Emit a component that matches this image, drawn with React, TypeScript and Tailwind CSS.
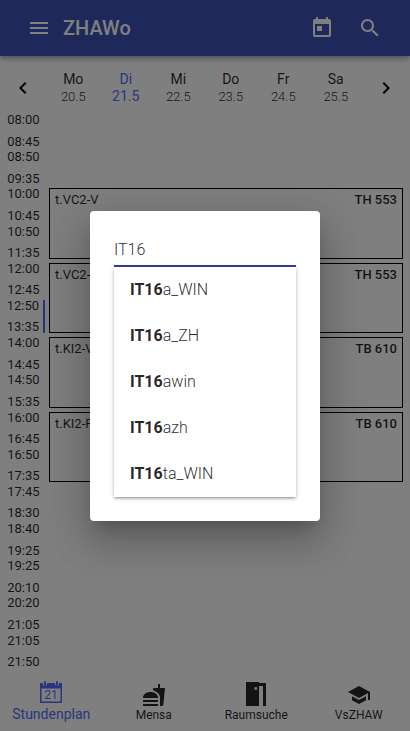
import React from "react";

const days = [
  ["Mo", "20.5"],
  ["Di", "21.5"],
  ["Mi", "22.5"],
  ["Do", "23.5"],
  ["Fr", "24.5"],
  ["Sa", "25.5"],
];

const slots = [
  ["08:00", "08:45"],
  ["08:50", "09:35"],
  ["10:00", "10:45"],
  ["10:50", "11:35"],
  ["12:00", "12:45"],
  ["12:50", "13:35"],
  ["14:00", "14:45"],
  ["14:50", "15:35"],
  ["16:00", "16:45"],
  ["16:50", "17:35"],
  ["17:45", "18:30"],
  ["18:40", "19:25"],
  ["19:25", "20:10"],
  ["20:20", "21:05"],
  ["21:05", "21:50"],
];

const lessons = [
  ["t.VC2-V", "TH 553"],
  ["t.VC2-P", "TH 553"],
  ["t.KI2-V", "TB 610"],
  ["t.KI2-P", "TB 610"],
];

const suggestions = ["a_WIN", "a_ZH", "awin", "azh", "ta_WIN"];

function Icon({ d, className = "size-6" }: { d: string; className?: string }) {
  return (
    <svg viewBox="0 0 24 24" className={`shrink-0 fill-current ${className}`}>
      <path d={d} />
    </svg>
  );
}

function CalendarIcon() {
  return (
    <svg viewBox="0 0 22 22" className="h-[22px] w-[22px]">
      <path
        fill="currentColor"
        fillRule="evenodd"
        d="M0 2h3v1a2 2 0 0 0 4 0V2h8v1a2 2 0 0 0 4 0V2h3v20H0zM1.5 7.5v13h19v-13z"
      />
      <rect x="4" y="0" width="2" height="5" rx="1" fill="currentColor" />
      <rect x="16" y="0" width="2" height="5" rx="1" fill="currentColor" />
      <text x="11" y="18.2" textAnchor="middle" fontSize="12" fontFamily="Roboto, sans-serif" fill="currentColor">
        21
      </text>
    </svg>
  );
}

function DoorIcon() {
  return (
    <svg viewBox="0 0 20 24" className="h-6 w-5 fill-current">
      <path fillRule="evenodd" d="M0 0h13v24H0zM8.5 5.2v2.6h2.6V5.2z" />
      <path d="M13 1h7v23h-3V4h-4z" />
    </svg>
  );
}

function Header() {
  return (
    <header className="relative z-10 flex h-14 shrink-0 items-center bg-[#3f51b5] pr-7 pl-[27px] text-white shadow-[0_2px_4px_-1px_rgba(0,0,0,0.2),0_4px_5px_rgba(0,0,0,0.14),0_1px_10px_rgba(0,0,0,0.12)]">
      <Icon d="M3 18h18v-2H3v2zm0-5h18v-2H3v2zm0-7v2h18V6H3z" />
      <h1 className="ml-3 grow text-[20px] font-medium">ZHAWo</h1>
      <Icon d="M19 3h-1V1h-2v2H8V1H6v2H5c-1.11 0-1.99.9-1.99 2L3 19c0 1.1.89 2 2 2h14c1.1 0 2-.9 2-2V5c0-1.1-.9-2-2-2zm0 16H5V8h14v11zM7 10h5v5H7z" />
      <Icon
        className="ml-6 size-6"
        d="M15.5 14h-.79l-.28-.27C15.41 12.59 16 11.11 16 9.5 16 5.91 13.09 3 9.5 3S3 5.91 3 9.5 5.91 16 9.5 16c1.61 0 3.09-.59 4.23-1.57l.27.28v.79l5 4.99L20.49 19l-4.99-5zm-6 0C7.01 14 5 11.99 5 9.5S7.01 5 9.5 5 14 7.01 14 9.5 11.99 14 9.5 14z"
      />
    </header>
  );
}

function DayBar() {
  return (
    <div className="flex h-14 shrink-0 items-center px-[11px]">
      <Icon className="mt-2 size-6" d="M15.41 7.41L14 6l-6 6 6 6 1.41-1.41L10.83 12z" />
      <div className="mt-2 ml-3 grid w-[315px] grid-cols-6 text-center">
        {days.map(([name, date]) => (
          <div
            key={name}
            className={
              name === "Di"
                ? "text-[14px] leading-[17px] text-[#536dfe]"
                : "text-[14px] leading-[17px] text-black/85"
            }
          >
            <div>{name}</div>
            <div className={name === "Di" ? "" : "text-[13px] font-light"}>{date}</div>
          </div>
        ))}
      </div>
      <Icon className="mt-2 ml-3 size-6" d="M10 6L8.59 7.41 13.17 12l-4.58 4.59L10 18l6-6z" />
    </div>
  );
}

function Schedule() {
  return (
    <main className="flex h-[558px] shrink-0 text-[13px] leading-[15px] text-black/85">
      <div className="flex w-[45px] flex-col">
        {slots.map(([from, to], i) => (
          <div key={i} className="flex h-[37.2px] flex-col">
            <div
              className={
                i === 5
                  ? "mt-0.5 flex h-[33px] flex-col justify-between border-r-2 border-[#536dfe] pr-1 text-right"
                  : "flex h-[36.5px] flex-col justify-between pr-[5.5px] text-right"
              }
            >
              <div className={i === 5 ? "-mt-0.5" : ""}>{from}</div>
              <div className={i === 5 ? "-mb-[1.5px]" : ""}>{to}</div>
            </div>
          </div>
        ))}
      </div>
      <div className="flex grow flex-col pt-[74.4px] pr-[7px] pl-1">
        {lessons.map(([course, room], i) => (
          <div key={i} className="h-[74.4px] py-0.5">
            <div className="flex h-full justify-between border border-black px-[5px] pt-[3px]">
              <span>{course}</span>
              <span className="font-medium">{room}</span>
            </div>
          </div>
        ))}
      </div>
    </main>
  );
}

function BottomNav() {
  return (
    <nav className="grid h-[61px] shrink-0 grid-cols-4 text-center text-[12px] leading-4 text-black/85">
      <div className="flex flex-col items-center pt-[11px] text-[#536dfe]">
        <CalendarIcon />
        <span className="mt-[3px] text-[14px]">Stundenplan</span>
      </div>
      <div className="flex flex-col items-center pt-[13px]">
        <Icon d="M18.06 22.99h1.66c.84 0 1.53-.64 1.63-1.46L23 5.05h-5V1h-1.97v4.05h-4.97l.3 2.34c1.71.47 3.31 1.32 4.27 2.26 1.44 1.42 2.43 2.89 2.43 5.29v8.05zM1 21.99V21h15.03v.99c0 .55-.45 1-1.01 1H2.01c-.56 0-1.01-.45-1.01-1zm15.03-7c0-8-15.03-8-15.03 0h15.03zM1.02 17h15v2h-15z" />
        <span>Mensa</span>
      </div>
      <div className="flex flex-col items-center pt-3">
        <DoorIcon />
        <span className="mt-px">Raumsuche</span>
      </div>
      <div className="flex flex-col items-center pt-[13px]">
        <Icon d="M5 13.18v4L12 21l7-3.82v-4L12 17l-7-3.82zM12 3L1 9l11 6 9-4.91V17h2V9L12 3z" />
        <span>VsZHAW</span>
      </div>
    </nav>
  );
}

function ClassDialog() {
  return (
    <div className="h-[310px] w-[230px] rounded-[4px] bg-white p-6 shadow-[0_11px_15px_-7px_rgba(0,0,0,0.2),0_24px_38px_3px_rgba(0,0,0,0.14),0_9px_46px_8px_rgba(0,0,0,0.12)]">
      <div className="flex h-8 items-center border-b-2 border-[#303f9f] text-[16px] font-light text-black/85">
        <span>IT16</span>
      </div>
      <ul className="h-[230px] bg-white shadow-[0_1px_5px_rgba(0,0,0,0.2),0_2px_2px_rgba(0,0,0,0.14),0_3px_1px_-2px_rgba(0,0,0,0.12)]">
        {suggestions.map((rest) => (
          <li key={rest} className="flex h-[46px] items-center px-4 text-[16px] font-light text-black/85">
            <span className="font-bold">IT16</span>
            <span>{rest}</span>
          </li>
        ))}
      </ul>
    </div>
  );
}

export default function App() {
  return (
    <div className="relative flex h-[731px] w-[410px] flex-col overflow-hidden bg-white font-[Roboto,sans-serif]">
      <Header />
      <DayBar />
      <Schedule />
      <BottomNav />
      <div className="absolute inset-0 z-20 flex items-center justify-center bg-black/50">
        <ClassDialog />
      </div>
    </div>
  );
}
